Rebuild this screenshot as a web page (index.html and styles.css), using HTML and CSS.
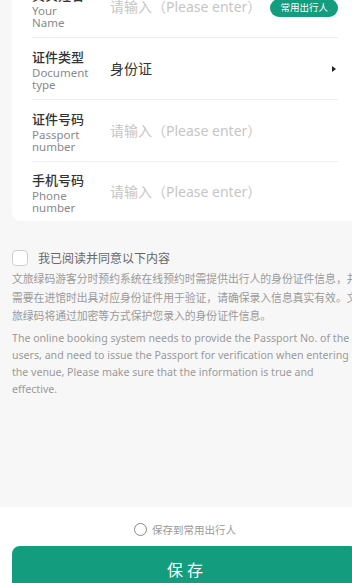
FILE: index.html
```html
<!DOCTYPE html>
<html lang="zh">
<head>
<meta charset="utf-8">
<link rel="stylesheet" href="styles.css">
</head>
<body>
<div class="page">
  <div class="main">
    <div class="card">
      <div class="row">
        <div class="label"><div class="zh">真实姓名</div><div class="en">Your<br>Name</div></div>
        <div class="value placeholder">请输入（Please enter）</div>
        <div class="badge">常用出行人</div>
      </div>
      <div class="row">
        <div class="label"><div class="zh">证件类型</div><div class="en">Document<br>type</div></div>
        <div class="value">身份证</div>
        <div class="arrow"></div>
      </div>
      <div class="row">
        <div class="label"><div class="zh">证件号码</div><div class="en">Passport<br>number</div></div>
        <div class="value placeholder">请输入（Please enter）</div>
      </div>
      <div class="row last">
        <div class="label"><div class="zh">手机号码</div><div class="en">Phone<br>number</div></div>
        <div class="value placeholder">请输入（Please enter）</div>
      </div>
    </div>
    <div class="agree">
      <span class="checkbox"></span>
      <span class="agree-text">我已阅读并同意以下内容</span>
    </div>
    <p class="notice-zh">文旅绿码游客分时预约系统在线预约时需提供出行人的身份证件信息，并需要在进馆时出具对应身份证件用于验证，请确保录入信息真实有效。文旅绿码将通过加密等方式保护您录入的身份证件信息。</p>
    <p class="notice-en">The online booking system needs to provide the Passport No. of the users, and need to issue the Passport for verification when entering the venue, Please make sure that the information is true and effective.</p>
  </div>
  <div class="footer">
    <div class="save-common"><span class="radio"></span><span>保存到常用出行人</span></div>
    <div class="save-btn">保存</div>
  </div>
</div>
</body>
</html>
```
FILE: styles.css
```css
html, body {
  margin: 0;
  padding: 0;
  overflow: hidden;
  background: #f7f7f7;
}
body {
  width: 352px;
  height: 583px;
  font-family: "Noto Sans", "Noto Sans CJK SC", sans-serif;
}
.page {
  width: 370px;
  margin-top: -24px;
}
.main {
  height: 531px;
  box-sizing: border-box;
  background: #f7f7f7;
  padding: 0 12px;
}
.card {
  background: #fff;
  border-radius: 0 0 8px 8px;
  padding: 0 20px;
}
.row {
  display: flex;
  align-items: center;
  height: 62px;
  box-sizing: border-box;
  border-bottom: 1px solid #eeeeee;
}
.row.last {
  border-bottom: none;
  height: 59px;
}
.label {
  width: 78px;
  flex: none;
  padding-top: 1px;
}
.zh {
  font-size: 13px;
  line-height: 20px;
  font-weight: 500;
  color: #333;
}
.en {
  font-size: 11.5px;
  line-height: 12.5px;
  color: #8a8a8a;
}
.value {
  flex: 1;
  font-size: 14px;
  color: #333;
  line-height: 20px;
}
.placeholder {
  color: #c6c6c6;
}
.badge {
  background: #139c7d;
  color: #fff;
  font-size: 9.5px;
  line-height: 18px;
  height: 18px;
  padding: 0 10px;
  border-radius: 9px;
  flex: none;
  margin-top: 2px;
}
.arrow {
  width: 0;
  height: 0;
  border-left: 4px solid #222;
  border-top: 3px solid transparent;
  border-bottom: 3px solid transparent;
  margin-right: 2px;
}
.agree {
  display: flex;
  align-items: center;
  margin-top: 29px;
  height: 16px;
}
.checkbox {
  width: 14px;
  height: 14px;
  border: 1px solid #cfcfcf;
  border-radius: 4px;
  background: #fff;
  margin-right: 10px;
}
.agree-text {
  font-size: 12px;
  color: #666;
}
.notice-zh {
  margin: 4px 0 0;
  font-size: 10.8px;
  line-height: 18.5px;
  color: #9a9a9a;
}
.notice-en {
  margin: 4px 0 0;
  font-size: 10.6px;
  line-height: 17px;
  color: #9a9a9a;
}
.footer {
  background: #fff;
  padding: 14px 12px 0;
  height: 80px;
}
.save-common {
  display: flex;
  justify-content: center;
  align-items: center;
  height: 16px;
  font-size: 10.5px;
  color: #999;
}
.radio {
  width: 11px;
  height: 11px;
  border: 1px solid #888;
  border-radius: 50%;
  margin-right: 5px;
}
.save-btn {
  margin-top: 9px;
  height: 46px;
  background: #139c7d;
  border-radius: 8px;
  color: #fff;
  font-size: 16px;
  letter-spacing: 4px;
  text-indent: 4px;
  display: flex;
  align-items: center;
  justify-content: center;
}
```
